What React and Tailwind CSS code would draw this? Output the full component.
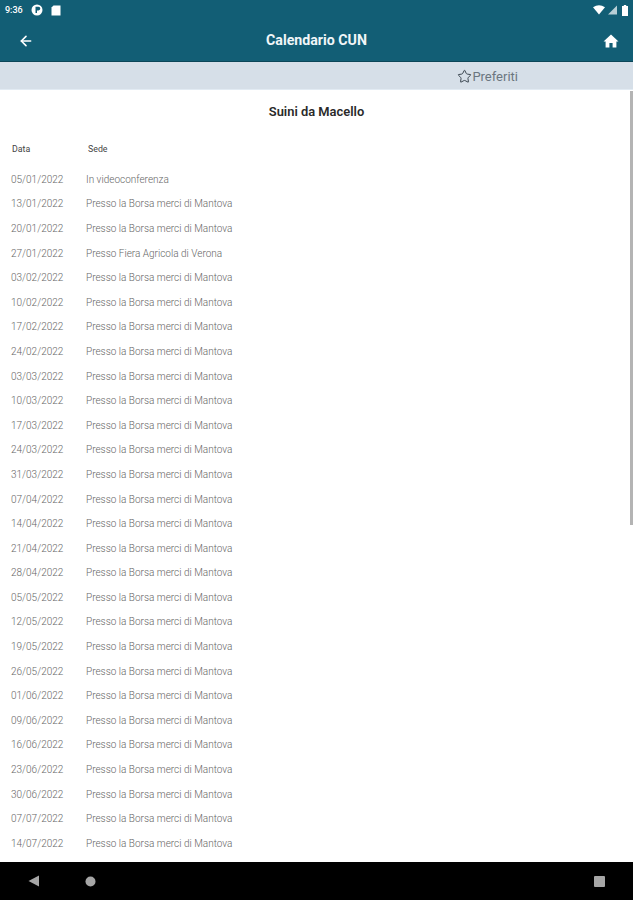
import React from 'react';
import { ArrowLeft, Star } from 'lucide-react';

const BORSA = 'Presso la Borsa merci di Mantova';

const rows = [
  ['05/01/2022', 'In videoconferenza'],
  ['13/01/2022', BORSA],
  ['20/01/2022', BORSA],
  ['27/01/2022', 'Presso Fiera Agricola di Verona'],
  ['03/02/2022', BORSA],
  ['10/02/2022', BORSA],
  ['17/02/2022', BORSA],
  ['24/02/2022', BORSA],
  ['03/03/2022', BORSA],
  ['10/03/2022', BORSA],
  ['17/03/2022', BORSA],
  ['24/03/2022', BORSA],
  ['31/03/2022', BORSA],
  ['07/04/2022', BORSA],
  ['14/04/2022', BORSA],
  ['21/04/2022', BORSA],
  ['28/04/2022', BORSA],
  ['05/05/2022', BORSA],
  ['12/05/2022', BORSA],
  ['19/05/2022', BORSA],
  ['26/05/2022', BORSA],
  ['01/06/2022', BORSA],
  ['09/06/2022', BORSA],
  ['16/06/2022', BORSA],
  ['23/06/2022', BORSA],
  ['30/06/2022', BORSA],
  ['07/07/2022', BORSA],
  ['14/07/2022', BORSA],
];

function StatusBar() {
  return (
    <div className="flex h-[20px] items-center justify-between pl-[5px] pr-[5px] text-white">
      <div className="flex items-center gap-[8px]">
        <span className="text-[9px] font-medium leading-none">9:36</span>
        <svg width="12" height="12" viewBox="0 0 12 12">
          <circle cx="6" cy="6" r="5.5" fill="#fff" />
          <path d="M4.5 2.8h3a1.8 1.8 0 0 1 0 3.6H6v2.6H4.5z" fill="#125e75" />
        </svg>
        <svg width="10" height="11" viewBox="0 0 10 11">
          <path d="M2.5 0.5h7v10h-9v-8z" fill="#fff" />
        </svg>
      </div>
      <div className="flex items-center gap-[3px]">
        <svg width="12" height="10" viewBox="0 0 12 10">
          <path d="M0 2.2Q6-1.6 12 2.2L6 9.5z" fill="#fff" />
        </svg>
        <svg width="9" height="10" viewBox="0 0 9 10">
          <path d="M9 0.5v9H0z" fill="#fff" fillOpacity="0.7" />
        </svg>
        <svg width="6" height="11" viewBox="0 0 6 11" className="ml-[2px]">
          <path d="M1.8 0h2.4v1H6v10H0V1h1.8z" fill="#fff" />
        </svg>
      </div>
    </div>
  );
}

function AppBar() {
  return (
    <div className="relative flex h-[42px] items-center justify-between border-b border-[#0b4658] pl-[18px] pr-[14px]">
      <ArrowLeft size={16} color="#fff" strokeWidth={2.4} />
      <span className="absolute left-0 right-0 top-[11px] text-center text-[14.2px] font-bold leading-[18px] text-[#f1f6f8]">
        Calendario CUN
      </span>
      <svg width="16" height="14" viewBox="0 0 16 14">
        <path d="M8 0.5 15.5 7.5H13.4V13.5H9.6V9H6.4V13.5H2.6V7.5H0.5z" fill="#fff" />
      </svg>
    </div>
  );
}

function App() {
  return (
    <div className="relative flex h-[900px] w-[633px] flex-col overflow-hidden bg-white font-['Roboto',sans-serif]">
      <div className="bg-[#125e75]">
        <StatusBar />
        <AppBar />
      </div>

      <div className="flex h-[28px] items-center justify-end border-b border-[#e2ebf3] bg-[#d6dfe8] pr-[115px] pt-[2px]">
        <Star size={15} color="#3b4650" strokeWidth={1.6} />
        <span className="text-[13px] leading-none text-[#6b7680]">Preferiti</span>
      </div>

      <div className="flex-1 overflow-hidden">
        <h1 className="mt-[14px] text-center text-[12.9px] font-semibold leading-[16px] text-[#2a2a2a]">
          Suini da Macello
        </h1>
        <div className="mt-[22px] flex h-[16px] items-center pl-[12px] text-[8.8px] text-[#444]">
          <span className="w-[76px]">Data</span>
          <span>Sede</span>
        </div>
        <div className="mt-[9px] pl-[11px] text-[10px] font-light text-[#666]">
          {rows.map(([date, place], i) => (
            <div key={i} className="flex h-[24.6px] items-center">
              <span className="w-[75px] shrink-0">{date}</span>
              <span>{place}</span>
            </div>
          ))}
        </div>
      </div>

      {/* scrollbar sits over the list */}
      <div className="absolute right-0 top-[91px] h-[434px] w-[3px] bg-[#b4b4b4]" />

      <div className="flex h-[38px] shrink-0 items-center bg-black">
        <svg width="12" height="12" viewBox="0 0 12 12" className="ml-[28px]">
          <path d="M11 0.5V11.5L0.5 6z" fill="#a6a6a6" />
        </svg>
        <svg width="11" height="11" viewBox="0 0 11 11" className="ml-[45px]">
          <circle cx="5.5" cy="5.5" r="5" fill="#a6a6a6" />
        </svg>
        <div className="ml-auto mr-[28px] h-[11px] w-[11px] rounded-[1px] bg-[#a6a6a6]" />
      </div>
    </div>
  );
}

export default App;
